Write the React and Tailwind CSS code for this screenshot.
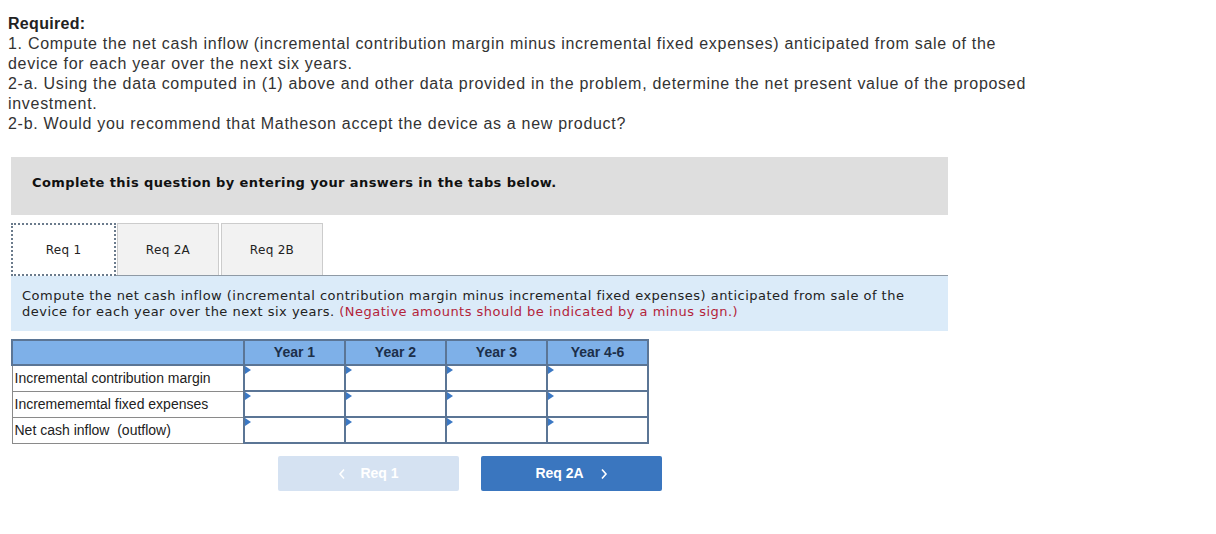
import React from "react";

const Marker = () => (
  <svg className="absolute left-0 top-0" width="6" height="8" viewBox="0 0 6 8">
    <polygon points="0,0 6,4 0,8" fill="#3b78c4" />
  </svg>
);

function InputCell() {
  return (
    <td className="relative p-0 border-2 border-[#5b7595] bg-white h-[26px]">
      <Marker />
    </td>
  );
}

const Chevron = ({ dir }) => (
  <svg width="8" height="12" viewBox="0 0 8 12" fill="none" stroke="currentColor" strokeWidth="1.6">
    {dir === "left" ? <polyline points="6,1.5 2,6 6,10.5" /> : <polyline points="2,1.5 6,6 2,10.5" />}
  </svg>
);

export default function App() {
  const rows = [
    "Incremental contribution margin",
    "Incremememtal fixed expenses",
    "Net cash inflow  (outflow)",
  ];
  return (
    <div className="w-[1216px] h-[534px] bg-white text-black relative overflow-hidden">
      <div className="pl-2 pt-[14px] text-[16px] leading-[20px] text-[#333] whitespace-nowrap tracking-[0.7px]" style={{ fontFamily: '"Liberation Sans", Arial, sans-serif' }}>
        <div className="font-bold text-[#222] tracking-[0.3px]">Required:</div>
        <div>1. Compute the net cash inflow (incremental contribution margin minus incremental fixed expenses) anticipated from sale of the</div>
        <div>device for each year over the next six years.</div>
        <div>2-a. Using the data computed in (1) above and other data provided in the problem, determine the net present value of the proposed</div>
        <div>investment.</div>
        <div>2-b. Would you recommend that Matheson accept the device as a new product?</div>
      </div>

      <div className="ml-[11px] mt-[23px] w-[937px]" style={{ fontFamily: '"DejaVu Sans", Verdana, sans-serif' }}>
        <div className="h-[58px] bg-[#dedede] flex items-center pl-[21px] pb-[6px] text-[13px] font-bold text-[#111] tracking-[0.4px]">
          Complete this question by entering your answers in the tabs below.
        </div>

        <div className="mt-[8px] flex items-end h-[52px]">
          <div className="w-[105px] h-[53px] bg-white border-2 border-dotted border-[#6b7b8c] flex items-center justify-center text-[12px] text-[#222] relative top-[1px] z-10 tracking-[0.3px]">
            Req 1
          </div>
          <div className="ml-[1px] w-[102px] h-[52px] bg-[#f2f2f2] border border-[#cccccc] border-b-0 flex items-center justify-center text-[12px] text-[#222] tracking-[0.3px]">
            Req 2A
          </div>
          <div className="ml-[2px] w-[102px] h-[52px] bg-[#f2f2f2] border border-[#cccccc] border-b-0 flex items-center justify-center text-[12px] text-[#222] tracking-[0.3px]">
            Req 2B
          </div>
        </div>

        <div className="border-t border-[#8f9aa5] bg-[#dbebf9] h-[56px] pl-[11px] pt-[12px] text-[13px] leading-[16px] text-[#222] whitespace-nowrap tracking-[0.48px]">
          <div>Compute the net cash inflow (incremental contribution margin minus incremental fixed expenses) anticipated from sale of the</div>
          <div>
            device for each year over the next six years. <span className="text-[#b3243a]">(Negative amounts should be indicated by a minus sign.)</span>
          </div>
        </div>
      </div>

      <table className="ml-[11px] mt-[8px] border-collapse" style={{ fontFamily: '"Liberation Sans", Arial, sans-serif' }}>
        <thead>
          <tr className="bg-[#7eb0e8] h-[25px]">
            <th className="w-[232px] border-2 border-[#5b7595] border-r-0"></th>
            {["Year 1", "Year 2", "Year 3", "Year 4-6"].map((y) => (
              <th key={y} className="w-[101px] border-2 border-[#5b7595] text-[14px] font-bold text-[#1c2f4a] p-0">
                {y}
              </th>
            ))}
          </tr>
        </thead>
        <tbody>
          {rows.map((r) => (
            <tr key={r}>
              <td className="border border-[#8a8a8a] pl-[2px] text-[14px] text-[#222] h-[26px] p-0 whitespace-pre">{r}</td>
              <InputCell />
              <InputCell />
              <InputCell />
              <InputCell />
            </tr>
          ))}
        </tbody>
      </table>

      <div className="flex ml-[278px] mt-[12px] gap-[22px]" style={{ fontFamily: '"Liberation Sans", Arial, sans-serif' }}>
        <div className="w-[181px] h-[35px] rounded-[2px] bg-[#d5e2f2] flex items-center justify-center text-white text-[14px] font-bold">
          <span className="mr-[14px] flex"><Chevron dir="left" /></span>Req 1
        </div>
        <div className="w-[181px] h-[35px] rounded-[2px] bg-[#3a76bf] flex items-center justify-center text-white text-[14px] font-bold">
          Req 2A<span className="ml-[16px] flex"><Chevron dir="right" /></span>
        </div>
      </div>
    </div>
  );
}
